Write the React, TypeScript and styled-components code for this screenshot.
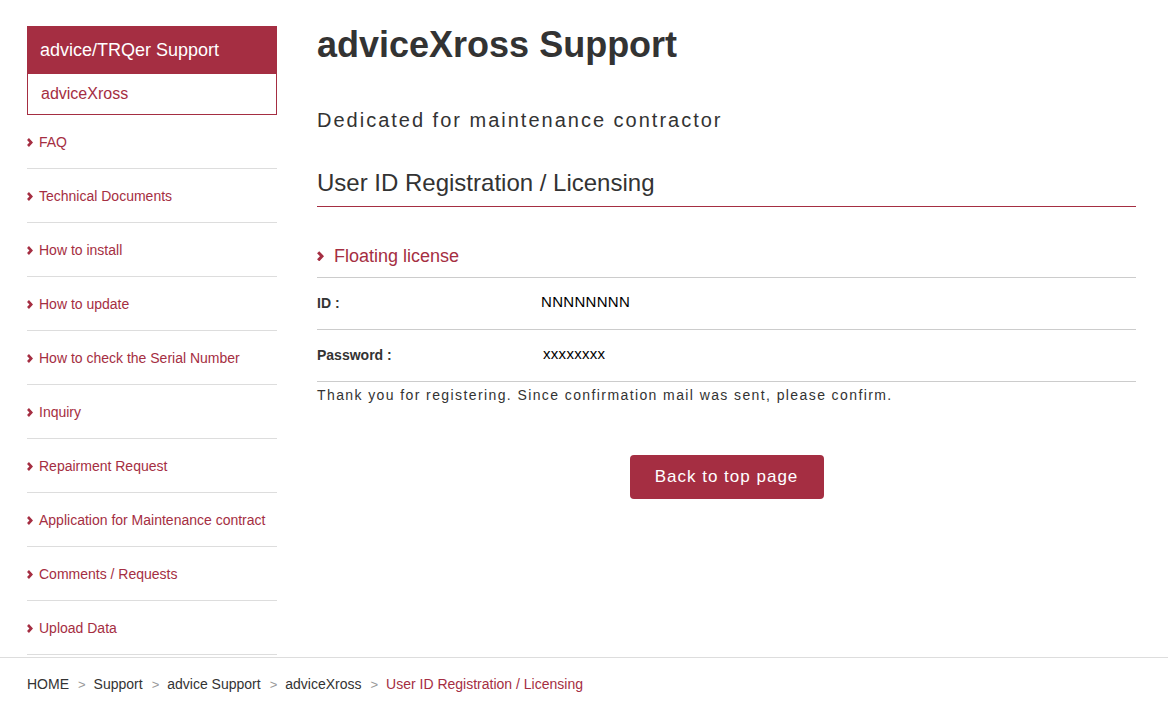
import styled, { createGlobalStyle } from 'styled-components';

const RED = '#a52e42';
const TEXT = '#333';

const GlobalStyle = createGlobalStyle`
  body {
    margin: 0;
    font-family: "Liberation Sans", Arial, sans-serif;
    color: ${TEXT};
    background: #fff;
  }
`;

const Page = styled.div`
  display: flex;
  gap: 40px;
  padding: 26px 32px 0 27px;
`;

const Sidebar = styled.aside`
  width: 250px;
  flex-shrink: 0;
`;

const SideHead = styled.div`
  height: 48px;
  display: flex;
  align-items: center;
  padding-left: 13px;
  background: ${RED};
  color: #fff;
  font-size: 18px;
`;

const SideSub = styled.div`
  height: 40px;
  display: flex;
  align-items: center;
  padding-left: 13px;
  border: 1px solid ${RED};
  border-top: none;
  color: ${RED};
  font-size: 16px;
`;

const NavList = styled.ul`
  list-style: none;
  margin: 0;
  padding: 0;
`;

const NavItem = styled.li`
  box-sizing: border-box;
  height: 54px;
  border-bottom: 1px solid #ddd;
  display: flex;
  align-items: center;
  gap: 6px;
  color: ${RED};
  font-size: 14px;
  padding-top: 1px;
`;

const Main = styled.main`
  flex: 1;
`;

const Title = styled.h1`
  margin: 1px 0 0;
  font-size: 36px;
  line-height: 1;
  font-weight: bold;
  color: ${TEXT};
`;

const Lead = styled.p`
  margin: 47px 0 0;
  font-size: 20px;
  line-height: 1;
  letter-spacing: 2px;
`;

const Section = styled.h2`
  margin: 41px 0 0;
  font-size: 24px;
  line-height: 1;
  font-weight: normal;
  padding-bottom: 11px;
  border-bottom: 1px solid ${RED};
`;

const SubHead = styled.h3`
  margin: 40px 0 0;
  display: flex;
  align-items: center;
  gap: 10px;
  font-size: 18px;
  line-height: 1;
  font-weight: normal;
  color: ${RED};
  padding-bottom: 12px;
  border-bottom: 1px solid #ccc;
`;

const Row = styled.div`
  box-sizing: border-box;
  height: 52px;
  padding-bottom: 4px;
  display: flex;
  align-items: center;
  border-bottom: 1px solid #ccc;
`;

const Label = styled.div`
  width: 224px;
  font-size: 14px;
  font-weight: bold;
  padding-top: 2px;
`;

const Value = styled.div<{ $shift?: number }>`
  font-size: 15px;
  letter-spacing: 0.3px;
  color: #000;
  padding-left: ${p => p.$shift ?? 0}px;
`;

const Note = styled.p`
  margin: 5px 0 0;
  font-size: 14px;
  letter-spacing: 1.4px;
`;

const Center = styled.div`
  display: flex;
  justify-content: center;
  margin-top: 52px;
`;

const Button = styled.button`
  width: 194px;
  height: 44px;
  border: none;
  border-radius: 4px;
  background: ${RED};
  color: #fff;
  font-family: inherit;
  font-size: 17px;
  letter-spacing: 1px;
  cursor: pointer;
`;

const Footer = styled.footer`
  margin-top: 2px;
  border-top: 1px solid #ddd;
  padding: 18px 27px 20px;
  font-size: 14px;
  display: flex;
  align-items: center;
`;

const Crumb = styled.span<{ $current?: boolean }>`
  color: ${p => (p.$current ? RED : TEXT)};
`;

const Sep = styled.span`
  color: #999;
  margin: 0 8px 0 9px;
  font-size: 13px;
`;

const Chevron = ({ size = 6 }: { size?: number }) => (
  <svg width={size} height={size * 1.5} viewBox="0 0 6 9" style={{ flexShrink: 0 }}>
    <polyline points="1,1 4.3,4.5 1,8" fill="none" stroke={RED} strokeWidth="2.6" />
  </svg>
);

const NAV = [
  'FAQ',
  'Technical Documents',
  'How to install',
  'How to update',
  'How to check the Serial Number',
  'Inquiry',
  'Repairment Request',
  'Application for Maintenance contract',
  'Comments / Requests',
  'Upload Data',
];

const CRUMBS = ['HOME', 'Support', 'advice Support', 'adviceXross'];

export default function App() {
  return (
    <>
      <GlobalStyle />
      <Page>
        <Sidebar>
          <SideHead>advice/TRQer Support</SideHead>
          <SideSub>adviceXross</SideSub>
          <NavList>
            {NAV.map(item => (
              <NavItem key={item}>
                <Chevron />
                {item}
              </NavItem>
            ))}
          </NavList>
        </Sidebar>

        <Main>
          <Title>adviceXross Support</Title>
          <Lead>Dedicated for maintenance contractor</Lead>
          <Section>User ID Registration / Licensing</Section>
          <SubHead>
            <Chevron size={7} />
            Floating license
          </SubHead>
          <Row>
            <Label>ID :</Label>
            <Value>NNNNNNNN</Value>
          </Row>
          <Row>
            <Label>Password :</Label>
            <Value $shift={2}>xxxxxxxx</Value>
          </Row>
          <Note>Thank you for registering. Since confirmation mail was sent, please confirm.</Note>
          <Center>
            <Button>Back to top page</Button>
          </Center>
        </Main>
      </Page>

      <Footer>
        {CRUMBS.map(c => (
          <span key={c}>
            <Crumb>{c}</Crumb>
            <Sep>&gt;</Sep>
          </span>
        ))}
        <Crumb $current>User ID Registration / Licensing</Crumb>
      </Footer>
    </>
  );
}
